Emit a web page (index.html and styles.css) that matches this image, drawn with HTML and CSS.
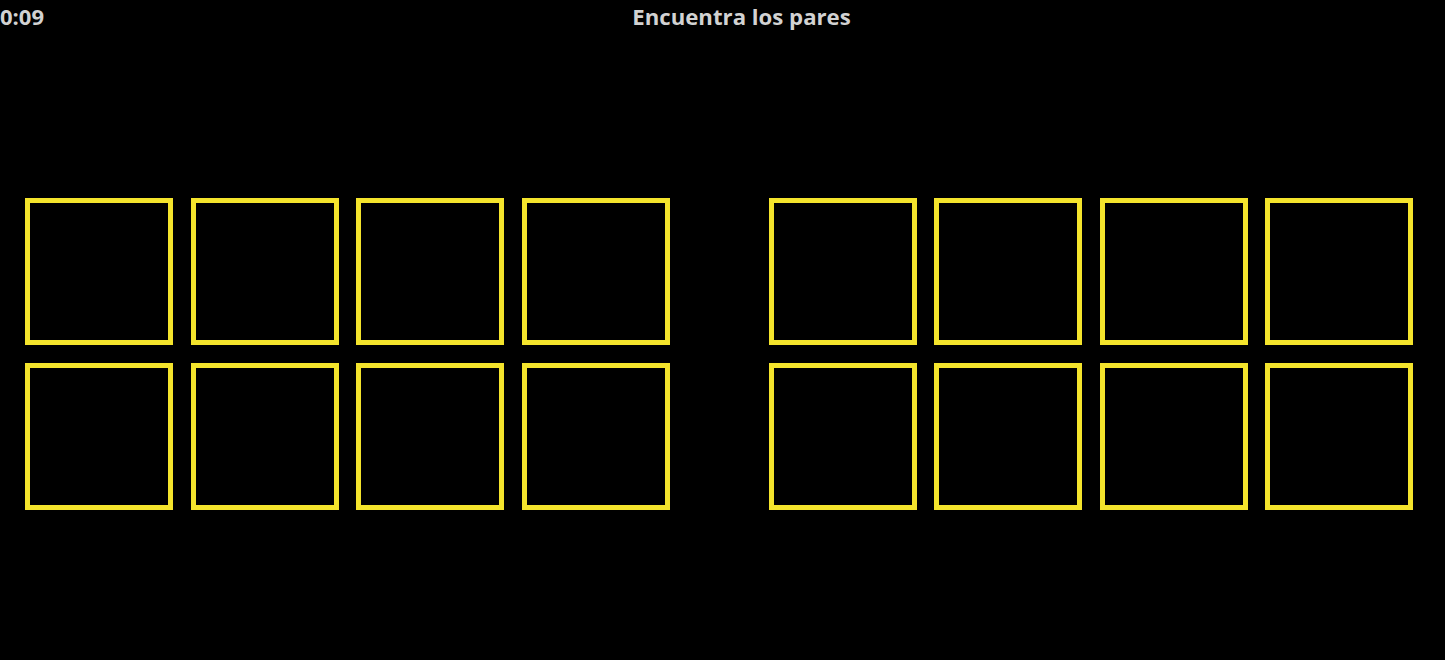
FILE: index.html
```html
<!DOCTYPE html>
<html lang="es">
<head>
<meta charset="utf-8">
<title>Encuentra los pares</title>
<link rel="stylesheet" href="styles.css">
</head>
<body>
<div class="page">
  <header class="topbar">
    <span class="timer">0:09</span>
    <h1 class="title">Encuentra los pares</h1>
    <span class="score">.</span>
  </header>
  <main class="board">
    <div class="group">
      <div class="card"></div><div class="card"></div><div class="card"></div><div class="card"></div>
      <div class="card"></div><div class="card"></div><div class="card"></div><div class="card"></div>
    </div>
    <div class="group">
      <div class="card"></div><div class="card"></div><div class="card"></div><div class="card"></div>
      <div class="card"></div><div class="card"></div><div class="card"></div><div class="card"></div>
    </div>
  </main>
</div>
</body>
</html>
```
FILE: styles.css
```css
html, body {
  margin: 0;
  padding: 0;
  background: #000;
  overflow: hidden;
  height: 100%;
}
.page {
  width: 1445px;
  height: 660px;
  font-family: "Open Sans", "Noto Sans", sans-serif;
  color: #d2d2d2;
}
.topbar {
  display: grid;
  grid-template-columns: 1fr auto 1fr;
  align-items: center;
  width: 1483px;
  height: 32px;
}
.timer {
  font-size: 22px;
  font-weight: 700;
  justify-self: start;
  line-height: 31px;
}
.title {
  margin: 0;
  font-size: 22.2px;
  font-weight: 700;
  line-height: 31px;
}
.score {
  justify-self: start;
  margin-left: 594px;
  font-size: 22px;
  font-weight: 700;
  line-height: 30px;
}
.board {
  display: flex;
  gap: 99px;
  padding: 166px 0 0 25px;
}
.group {
  display: grid;
  grid-template-columns: repeat(4, 148px);
  grid-auto-rows: 147px;
  column-gap: 17.5px;
  row-gap: 18px;
}
.card {
  box-sizing: border-box;
  border: 5px solid #f4e42c;
  background: #000;
}
```
